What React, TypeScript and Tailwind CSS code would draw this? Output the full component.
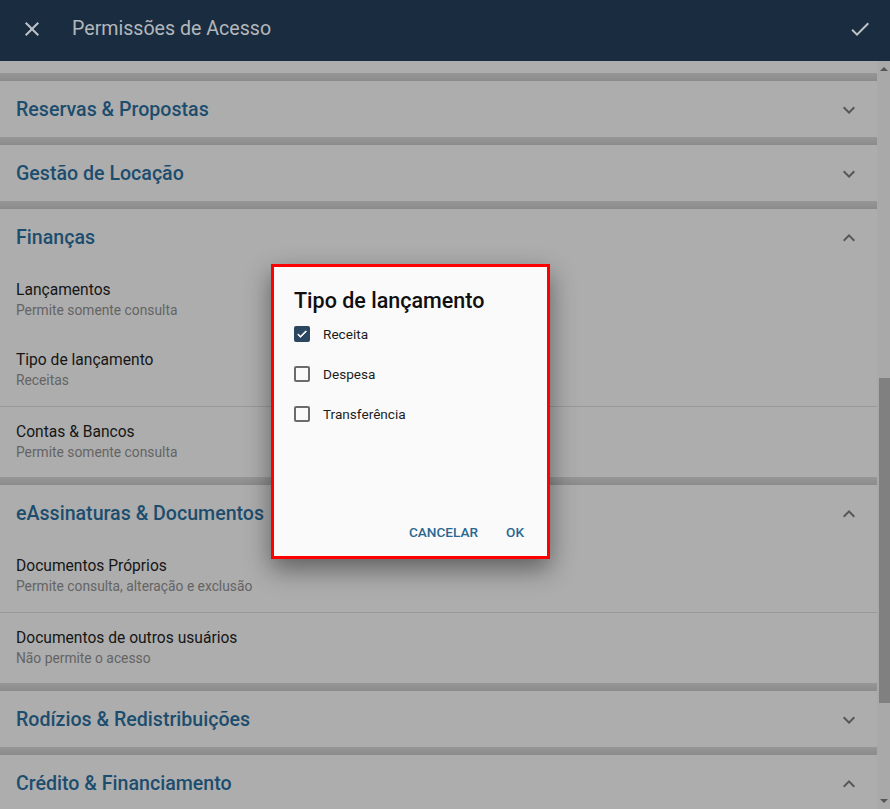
import type { ReactNode } from 'react'

const font = { fontFamily: 'Roboto, "Noto Sans", sans-serif' }

type Item = { title: string; sub: string; divider?: boolean }

function ChevronIcon({ up }: { up?: boolean }) {
  return (
    <svg width="24" height="24" viewBox="0 0 24 24" className="text-[#565656]" fill="currentColor">
      {up ? (
        <path d="M12 8l-6 6 1.41 1.41L12 10.83l4.59 4.58L18 14z" />
      ) : (
        <path d="M16.59 8.59L12 13.17 7.41 8.59 6 10l6 6 6-6z" />
      )}
    </svg>
  )
}

function Gap() {
  return <div className="h-2 bg-linear-to-b from-[#979797] to-[#8b8b8b]" />
}

function Section({ title, open, items }: { title: string; open?: boolean; items?: Item[] }) {
  return (
    <div className="bg-[#adadad]">
      <div className="flex h-14 items-center justify-between px-4 pt-px">
        <span className="text-[19.6px] font-medium text-[#1d4d6e]">{title}</span>
        <ChevronIcon up={open} />
      </div>
      {items?.map((it) => (
        <div key={it.title}>
          <div className={`px-4 pt-[15px] ${it.divider ? 'pb-[16px]' : 'pb-[15px]'}`}>
            <div className="text-[15.6px] leading-5 text-[#161616]">{it.title}</div>
            <div className="text-[13.8px] leading-5 text-[#646464]">{it.sub}</div>
          </div>
          {it.divider && <div className="h-px bg-[#999999]" />}
        </div>
      ))}
    </div>
  )
}

function CheckRow({ label, checked }: { label: string; checked?: boolean }) {
  return (
    <div className="flex h-10 items-center gap-[13px]">
      {checked ? (
        <div className="flex h-4 w-4 items-center justify-center rounded-[2px] bg-[#2b4660]">
          <svg width="12" height="12" viewBox="0 0 24 24" fill="white">
            <path d="M9 16.17L4.83 12l-1.42 1.41L9 19 21 7l-1.41-1.41z" stroke="white" strokeWidth="1.5" />
          </svg>
        </div>
      ) : (
        <div className="h-4 w-4 rounded-[2px] border-2 border-[#6b6b6b]" />
      )}
      <span className="text-[13.6px] text-[#1c1c1c]">{label}</span>
    </div>
  )
}

function TextButton({ children }: { children: ReactNode }) {
  return (
    <button className="h-9 px-2 text-[13.6px] font-medium uppercase text-[#2a6790]">{children}</button>
  )
}

export default function App() {
  return (
    <div style={font} className="relative h-[809px] w-[890px] overflow-hidden bg-[#adadad]">
      <header className="flex h-[61px] items-center bg-[#1a2d40] pb-[3px] pl-5 pr-[18px]">
        <svg width="24" height="24" viewBox="0 0 24 24" fill="#bfc3c7">
          <path d="M19 6.41L17.59 5 12 10.59 6.41 5 5 6.41 10.59 12 5 17.59 6.41 19 12 13.41 17.59 19 19 17.59 13.41 12z" />
        </svg>
        <h1 className="ml-7 flex-1 text-[19.6px] text-[#b3b7bb]">Permissões de Acesso</h1>
        <svg width="24" height="24" viewBox="0 0 24 24" fill="#bfc3c7">
          <path d="M9 16.17L4.83 12l-1.42 1.41L9 19 21 7l-1.41-1.41z" />
        </svg>
      </header>

      <div className="flex h-[748px]">
        <main className="w-[877px]">
          <div className="h-3 bg-[#adadad]" />
          <Gap />
          <Section title="Reservas & Propostas" />
          <Gap />
          <Section title="Gestão de Locação" />
          <Gap />
          <Section
            title="Finanças"
            open
            items={[
              { title: 'Lançamentos', sub: 'Permite somente consulta' },
              { title: 'Tipo de lançamento', sub: 'Receitas', divider: true },
              { title: 'Contas & Bancos', sub: 'Permite somente consulta' },
            ]}
          />
          <Gap />
          <Section
            title="eAssinaturas & Documentos"
            open
            items={[
              { title: 'Documentos Próprios', sub: 'Permite consulta, alteração e exclusão', divider: true },
              { title: 'Documentos de outros usuários', sub: 'Não permite o acesso' },
            ]}
          />
          <Gap />
          <Section title="Rodízios & Redistribuições" />
          <Gap />
          <Section title="Crédito & Financiamento" open />
        </main>

        <div className="flex w-[13px] flex-col bg-[#a9a9a9]">
          <div className="flex h-4 items-center justify-center">
            <div className="h-0 w-0 border-x-4 border-b-4 border-x-transparent border-b-[#555]" />
          </div>
          <div className="h-[301px]" />
          <div className="ml-[2px] h-[325px] bg-[#808080]" />
          <div className="flex-1" />
          <div className="flex h-4 items-center justify-center">
            <div className="h-0 w-0 border-x-4 border-t-4 border-x-transparent border-t-[#555]" />
          </div>
        </div>
      </div>

      <div className="absolute left-[271px] top-[264px] flex h-[295px] w-[279px] flex-col border-[3px] border-[#ff0000] bg-[#fafafa] shadow-[0_10px_24px_rgba(0,0,0,0.45)]">
        <h2 className="px-5 pt-5 text-[21.5px] font-medium leading-[27px] text-[#0f0f0f]">Tipo de lançamento</h2>
        <div className="px-5">
          <CheckRow label="Receita" checked />
          <CheckRow label="Despesa" />
          <CheckRow label="Transferência" />
        </div>
        <div className="mt-auto flex justify-end gap-3 pb-[6px] pr-[15px]">
          <TextButton>Cancelar</TextButton>
          <TextButton>OK</TextButton>
        </div>
      </div>
    </div>
  )
}
